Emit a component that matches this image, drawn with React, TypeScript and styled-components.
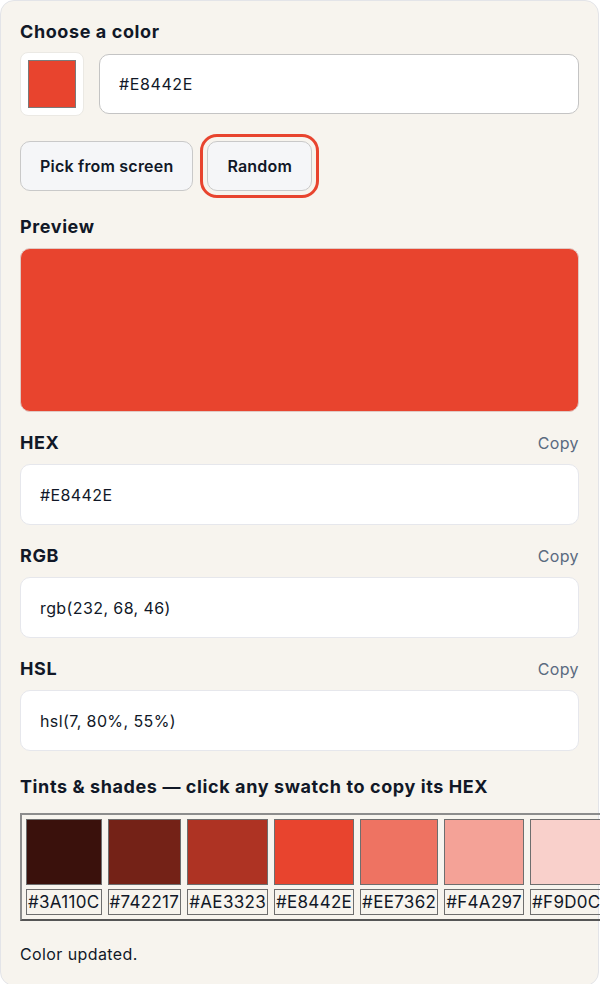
import React from "react";
import styled, { createGlobalStyle } from "styled-components";

const GlobalStyle = createGlobalStyle`
  html, body {
    margin: 0;
    padding: 0;
    background: #ffffff;
  }
  body {
    font-family: Inter, "Noto Sans", "Liberation Sans", sans-serif;
    letter-spacing: 0.4px;
    color: #111827;
  }
`;

const swatches = [
  "#3A110C",
  "#742217",
  "#AE3323",
  "#E8442E",
  "#EE7362",
  "#F4A297",
  "#F9D0CB",
];

const formats = [
  { label: "HEX", value: "#E8442E" },
  { label: "RGB", value: "rgb(232, 68, 46)" },
  { label: "HSL", value: "hsl(7, 80%, 55%)" },
];

const App: React.FC = (): JSX.Element => {
  return (
    <>
      <GlobalStyle />
      <Card>
        <Heading>Choose a color</Heading>
        <PickerRow>
          <ColorWell>
            <ColorChip $color="#E8442E" />
          </ColorWell>
          <HexInput defaultValue="#E8442E" />
        </PickerRow>

        <ButtonRow>
          <ActionButton>Pick from screen</ActionButton>
          <ActionButton $focused>Random</ActionButton>
        </ButtonRow>

        <SectionHeading>Preview</SectionHeading>
        <PreviewBox $color="#E8442E" />

        {formats.map((f) => (
          <FormatBlock key={f.label}>
            <FormatHeader>
              <FormatLabel>{f.label}</FormatLabel>
              <CopyLink>Copy</CopyLink>
            </FormatHeader>
            <ValueField>{f.value}</ValueField>
          </FormatBlock>
        ))}

        <SectionHeading>
          Tints &amp; shades — click any swatch to copy its HEX
        </SectionHeading>
        <SwatchStrip>
          {swatches.map((hex) => (
            <Swatch key={hex}>
              <SwatchColor $color={hex} />
              <SwatchLabel>{hex}</SwatchLabel>
            </Swatch>
          ))}
        </SwatchStrip>

        <Status>Color updated.</Status>
      </Card>
    </>
  );
};

export default App;

const Card = styled.main`
  box-sizing: border-box;
  width: 599px;
  min-height: 984px;
  margin: 0;
  padding: 19px 19px 20px;
  background: #f7f4ee;
  border: 1px solid #e3e4e8;
  border-radius: 14px;
`;

const Heading = styled.h2`
  margin: 0 0 8px;
  font-size: 18px;
  line-height: 24px;
  font-weight: 700;
  letter-spacing: 0.6px;
`;

const SectionHeading = styled(Heading)`
  margin: 24px 0 9px;
`;

const PickerRow = styled.div`
  display: flex;
  align-items: center;
  gap: 15px;
`;

const ColorWell = styled.div`
  box-sizing: border-box;
  width: 64px;
  height: 64px;
  display: flex;
  align-items: center;
  justify-content: center;
  background: #ffffff;
  border: 1px solid #ebe9e4;
  border-radius: 8px;
`;

const ColorChip = styled.div<{ $color: string }>`
  box-sizing: border-box;
  width: 48px;
  height: 48px;
  background: ${(p) => p.$color};
  border: 1px solid #7a7a7a;
`;

const HexInput = styled.input`
  box-sizing: border-box;
  flex: 1;
  height: 60px;
  padding: 0 19px;
  font-family: inherit;
  font-size: 16px;
  letter-spacing: 0.6px;
  color: #111827;
  background: #ffffff;
  border: 1px solid #c4c4c4;
  border-radius: 10px;
  outline: none;
`;

const ButtonRow = styled.div`
  display: flex;
  gap: 14px;
  margin-top: 25px;
`;

const ActionButton = styled.button<{ $focused?: boolean }>`
  box-sizing: border-box;
  height: 50px;
  padding: 0 19px;
  font-family: inherit;
  font-size: 16px;
  font-weight: 600;
  letter-spacing: 0.2px;
  color: #111827;
  background: #f5f6f8;
  border: 1px solid #c9c9c9;
  border-radius: 10px;
  outline: ${(p) => (p.$focused ? "3px solid #e8442e" : "none")};
  outline-offset: 4px;
`;

const PreviewBox = styled.div<{ $color: string }>`
  height: 164px;
  background: ${(p) => p.$color};
  border-radius: 10px;
  border: 1px solid #e0c9c4;
  box-sizing: border-box;
`;

const FormatBlock = styled.section`
  margin-top: 19px;
`;

const FormatHeader = styled.div`
  display: flex;
  align-items: center;
  justify-content: space-between;
  margin-bottom: 9px;
`;

const FormatLabel = styled.h3`
  margin: 0;
  font-size: 18px;
  line-height: 24px;
  font-weight: 700;
  letter-spacing: 0.6px;
`;

const CopyLink = styled.button`
  padding: 0;
  font-family: inherit;
  font-size: 16px;
  line-height: 24px;
  letter-spacing: 0.4px;
  color: #5a6a80;
  background: none;
  border: none;
`;

const ValueField = styled.div`
  box-sizing: border-box;
  height: 61px;
  display: flex;
  align-items: center;
  padding: 0 19px;
  font-size: 16px;
  background: #ffffff;
  border: 1px solid #e6e7ec;
  border-radius: 10px;
`;

const SwatchStrip = styled.div`
  display: flex;
  gap: 6px;
  width: max-content;
  margin-top: 14px;
  padding: 4px;
  border: 2px solid;
  border-color: #8c8c8c #555555 #555555 #8c8c8c;
`;

const Swatch = styled.button`
  display: flex;
  flex-direction: column;
  gap: 4px;
  padding: 0;
  font-family: inherit;
  background: none;
  border: none;
`;

const SwatchColor = styled.div<{ $color: string }>`
  box-sizing: border-box;
  width: 100%;
  height: 66px;
  background: ${(p) => p.$color};
  border: 1px solid #6e6e6e;
`;

const SwatchLabel = styled.span`
  box-sizing: border-box;
  display: block;
  height: 26px;
  padding: 0 1px;
  font-size: 17px;
  line-height: 24px;
  letter-spacing: 0.3px;
  color: #111827;
  white-space: nowrap;
  border: 1px solid #6e6e6e;
`;

const Status = styled.p`
  margin: 22px 0 0;
  font-size: 16px;
  line-height: 22px;
`;
